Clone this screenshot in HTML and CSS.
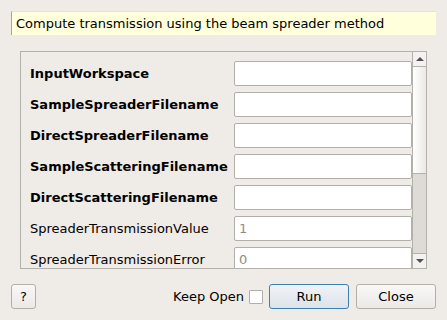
FILE: index.html
```html
<!DOCTYPE html>
<html lang="en">
<head>
    <meta charset="UTF-8">
    <title>CalculateTransmissionBeamSpreader</title>
    <link rel="stylesheet" href="styles.css">
</head>
<body>
    <div class="dialog">
        <div class="summary">Compute transmission using the beam spreader method</div>

        <div class="frame">
            <div class="props">
                <label class="name req">InputWorkspace</label>
                <input class="field" type="text">
                <label class="name req">SampleSpreaderFilename</label>
                <input class="field" type="text">
                <label class="name req">DirectSpreaderFilename</label>
                <input class="field" type="text">
                <label class="name req">SampleScatteringFilename</label>
                <input class="field" type="text">
                <label class="name req">DirectScatteringFilename</label>
                <input class="field" type="text">
                <label class="name">SpreaderTransmissionValue</label>
                <input class="field" type="text" placeholder="1">
                <label class="name">SpreaderTransmissionError</label>
                <input class="field" type="text" placeholder="0">
            </div>
            <div class="scrollbar">
                <div class="arrow up"></div>
                <div class="thumb"></div>
                <div class="track"></div>
                <div class="arrow down"></div>
            </div>
        </div>

        <div class="footer">
            <button class="btn help">?</button>
            <span class="spacer"></span>
            <label class="keep">Keep Open <span class="check"></span></label>
            <button class="btn run">Run</button>
            <button class="btn">Close</button>
        </div>
    </div>
</body>
</html>
```

FILE: styles.css
```css
body {
    margin: 0;
    background: #efebe7;
    font-family: "DejaVu Sans", sans-serif;
    font-size: 13px;
    color: #000;
}
.dialog {
    width: 447px;
    height: 320px;
    padding: 11px 11px 0 11px;
    box-sizing: border-box;
}
.summary {
    height: 24px;
    line-height: 24px;
    background: #ffffdc;
    border-left: 1px solid #a8a49e;
    border-top: 1px solid #e4e2d6;
    box-sizing: border-box;
    padding-left: 4px;
}
.frame {
    display: flex;
    margin: 16px 9px 0 9px;
    height: 218px;
    border: 1px solid #b4b0aa;
    box-sizing: border-box;
    overflow: hidden;
}
.props {
    flex: 1;
    display: grid;
    grid-template-columns: 198px 1fr;
    column-gap: 6px;
    row-gap: 6px;
    padding: 9px 0 0 9px;
    align-content: start;
    overflow: hidden;
}
.name {
    line-height: 25px;
    white-space: nowrap;
}
.req {
    font-weight: bold;
}
.field {
    height: 25px;
    margin: 0;
    box-sizing: border-box;
    border: 1px solid #b2aea8;
    border-radius: 2px;
    background: #fff;
    font: inherit;
    padding: 0 4px;
    width: 100%;
}
.field::placeholder {
    color: #8e8c8a;
}
.scrollbar {
    width: 14px;
    border-left: 1px solid #b4b0aa;
    box-sizing: border-box;
    display: flex;
    flex-direction: column;
    background: #dedbd7;
}
.arrow {
    height: 14px;
    background: #f4f2f0;
    display: flex;
    align-items: center;
    justify-content: center;
}
.arrow.up {
    border-bottom: 1px solid #b4b0aa;
}
.arrow.down {
    border-top: 1px solid #b4b0aa;
}
.arrow::after {
    content: "";
    border-left: 4px solid transparent;
    border-right: 4px solid transparent;
}
.up::after {
    border-bottom: 4px solid #505050;
}
.down::after {
    border-top: 4px solid #505050;
}
.thumb {
    height: 106px;
    background: linear-gradient(to right, #ffffff, #ebe9e6);
    border-bottom: 1px solid #b4b0aa;
}
.track {
    flex: 1;
}
.footer {
    display: flex;
    align-items: center;
    margin-top: 15px;
    height: 25px;
}
.spacer {
    flex: 1;
}
.btn {
    height: 25px;
    width: 80px;
    margin: 0;
    border: 1px solid #b2aea8;
    border-radius: 3px;
    background: linear-gradient(#f9f8f7, #ebe9e6);
    font: inherit;
    color: #000;
    padding: 0;
}
.help {
    width: 25px;
}
.keep {
    display: flex;
    align-items: center;
    gap: 5px;
    margin-right: 6px;
}
.check {
    width: 14px;
    height: 14px;
    border: 1px solid #b2aea8;
    background: #fff;
    box-sizing: border-box;
    border-radius: 1px;
}
.run {
    border-color: #3d7fae;
    background: linear-gradient(#f0f3f6, #dde3e9);
    margin-right: 7px;
}
```
